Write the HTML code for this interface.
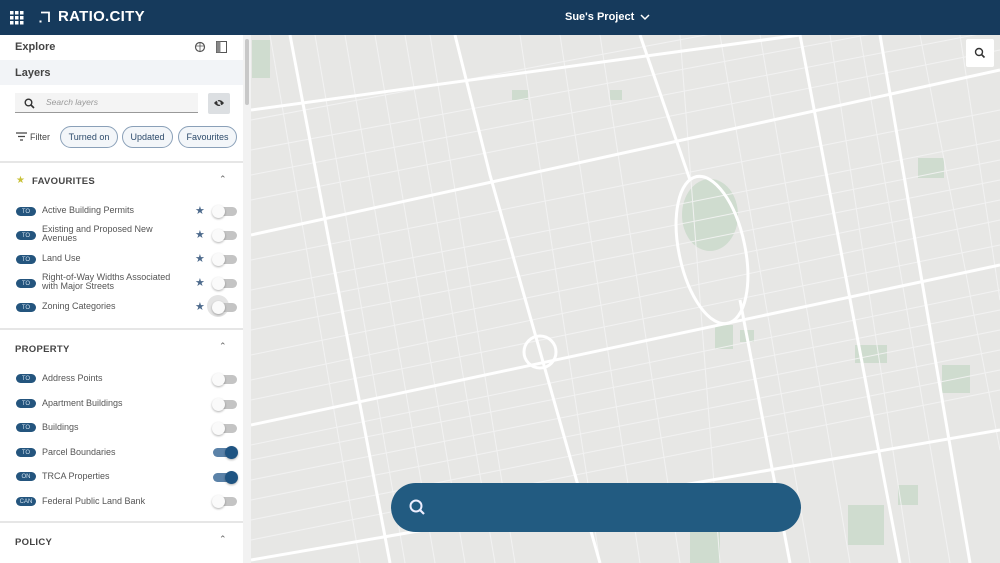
<!DOCTYPE html>
<html><head><style>
*{box-sizing:border-box;margin:0;padding:0}
body{width:1000px;height:563px;overflow:hidden;font-family:"Liberation Sans",sans-serif;position:relative;background:#fff}
.hdr{position:absolute;left:0;top:0;width:1000px;height:35px;background:#163a5c;color:#fff}
.side{position:absolute;left:0;top:35px;width:243px;height:528px;background:#fff;color:#333}
.sb{position:absolute;left:243px;top:35px;width:8px;height:528px;background:#f2f2f2}
.sb div{position:absolute;left:2px;top:4px;width:4px;height:66px;background:#c8c8c8;border-radius:2px}
.map{position:absolute;left:251px;top:35px;width:749px;height:528px;background:#e7e7e5;overflow:hidden}
.t{position:absolute;font-size:9px;color:#555}
.pill{position:absolute;font-size:9px;color:#2d4b6b;border:1px solid #8aa0b8;border-radius:11px;height:22px;line-height:20px;text-align:center;background:#f3f6f9}
.tag{position:absolute;left:16px;width:20px;height:9px;border-radius:5px;background:#24557e;color:#cfe0ee;font-size:6px;display:flex;align-items:center;justify-content:center;line-height:1}
.tg{position:absolute;left:213px;width:24px;height:9px;border-radius:5px;background:#c4c4c4}
.tg::after{content:"";position:absolute;left:-1px;top:-2px;width:13px;height:13px;border-radius:50%;background:#fafafa;box-shadow:0 1px 2px rgba(0,0,0,.3)}
.tg.on{background:#5b82a8}.tg.on::after{left:12px;background:#1f5482}
.st{position:absolute;left:195px;font-size:11px;color:#4d6a8c}
.sec{position:absolute;left:15px;font-size:9.5px;font-weight:bold;color:#444;letter-spacing:.3px}
.car{position:absolute;left:219px;font-size:9px;color:#666}
</style></head><body>
<div class="hdr">
<svg style="position:absolute;left:10px;top:11px" width="14" height="14"><g fill="#fff"><rect x="0" y="0" width="3.5" height="3.5"/><rect x="5" y="0" width="3.5" height="3.5"/><rect x="10" y="0" width="3.5" height="3.5"/><rect x="0" y="5" width="3.5" height="3.5"/><rect x="5" y="5" width="3.5" height="3.5"/><rect x="10" y="5" width="3.5" height="3.5"/><rect x="0" y="10" width="3.5" height="3.5"/><rect x="5" y="10" width="3.5" height="3.5"/><rect x="10" y="10" width="3.5" height="3.5"/></g></svg>
<svg style="position:absolute;left:39px;top:11px" width="12" height="12"><path d="M2 1.5H10V11" stroke="#fff" stroke-width="1.8" fill="none"/><rect x="0.5" y="9.5" width="2" height="2" fill="#fff"/></svg>
<div style="position:absolute;left:58px;top:8px;font-size:15px;font-weight:bold;letter-spacing:.3px">RATIO.CITY</div>
<div style="position:absolute;left:565px;top:11px;font-size:11px;font-weight:bold">Sue's Project</div>
<svg style="position:absolute;left:640px;top:13px" width="10" height="8"><path d="M1 2l4 4 4-4" stroke="#fff" stroke-width="1.5" fill="none"/></svg>
</div>
<div class="side">
<div style="position:absolute;left:15px;top:6px;font-size:11px;font-weight:bold;color:#444">Explore</div>
<svg style="position:absolute;left:194px;top:6px" width="12" height="12"><circle cx="6" cy="6" r="4.5" stroke="#555" stroke-width="1.2" fill="none"/><path d="M2 5h8M6 1.5v9" stroke="#555" stroke-width=".8"/></svg>
<svg style="position:absolute;left:216px;top:6px" width="11" height="12"><rect x="0.5" y="0.5" width="10" height="11" stroke="#555" fill="none"/><rect x="0.5" y="0.5" width="4" height="11" fill="#888"/></svg>
<div style="position:absolute;left:0;top:25px;width:243px;height:25px;background:#f2f4f7"></div>
<div style="position:absolute;left:15px;top:32px;font-size:11px;font-weight:bold;color:#444">Layers</div>
<div style="position:absolute;left:15px;top:58px;width:183px;height:20px;background:#f4f4f4;border-bottom:1px solid #999"></div>
<svg style="position:absolute;left:24px;top:63px" width="11" height="11"><circle cx="4.5" cy="4.5" r="3.3" stroke="#333" stroke-width="1.4" fill="none"/><path d="M7 7l3 3" stroke="#333" stroke-width="1.6"/></svg>
<div style="position:absolute;left:46px;top:62px;font-size:8.5px;font-style:italic;color:#999">Search layers</div>
<div style="position:absolute;left:208px;top:58px;width:22px;height:21px;background:#dcdfe2;border-radius:2px"></div>
<svg style="position:absolute;left:213px;top:63px" width="12" height="10"><path d="M1 5Q6 -1 11 5Q6 11 1 5Z" fill="#333"/><circle cx="6" cy="5" r="1.6" fill="#dcdfe2"/><path d="M2 0l8 10" stroke="#dcdfe2" stroke-width="1.2"/></svg>
<svg style="position:absolute;left:16px;top:97px" width="11" height="9"><path d="M0 1h11M2 4.5h7M4 8h3" stroke="#444" stroke-width="1.3"/></svg>
<div style="position:absolute;left:30px;top:97px;font-size:9px;color:#444">Filter</div>
<div class="pill" style="left:60px;top:91px;width:58px">Turned on</div>
<div class="pill" style="left:122px;top:91px;width:51px">Updated</div>
<div class="pill" style="left:178px;top:91px;width:59px">Favourites</div>
<div style="position:absolute;left:0;top:126px;width:243px;height:2px;background:#e6e6e6"></div>
<div style="position:absolute;left:16px;top:140px;font-size:10px;color:#c9c23a">★</div>
<div class="sec" style="left:32px;top:141px">FAVOURITES</div><div class="car" style="top:139px">⌃</div>
<div class="tag" style="top:172px">TO</div><div class="t" style="left:42px;top:170px">Active Building Permits</div><div class="st" style="top:169px">★</div><div class="tg" style="top:172px"></div>
<div class="tag" style="top:196px">TO</div><div class="t" style="left:42px;top:190px;line-height:9px">Existing and Proposed New<br>Avenues</div><div class="st" style="top:193px">★</div><div class="tg" style="top:196px"></div>
<div class="tag" style="top:220px">TO</div><div class="t" style="left:42px;top:218px">Land Use</div><div class="st" style="top:217px">★</div><div class="tg" style="top:220px"></div>
<div class="tag" style="top:244px">TO</div><div class="t" style="left:42px;top:238px;line-height:9px">Right-of-Way Widths Associated<br>with Major Streets</div><div class="st" style="top:241px">★</div><div class="tg" style="top:244px"></div>
<div class="tag" style="top:268px">TO</div><div class="t" style="left:42px;top:266px">Zoning Categories</div><div class="st" style="top:265px">★</div>
<div style="position:absolute;left:207px;top:260px;width:22px;height:22px;border-radius:50%;background:#e4e4e4"></div><div class="tg" style="top:268px"></div>
<div style="position:absolute;left:0;top:293px;width:243px;height:2px;background:#e6e6e6"></div>
<div class="sec" style="top:309px">PROPERTY</div><div class="car" style="top:306px">⌃</div>
<div class="tag" style="top:339px">TO</div><div class="t" style="left:42px;top:338px">Address Points</div><div class="tg" style="top:340px"></div>
<div class="tag" style="top:364px">TO</div><div class="t" style="left:42px;top:363px">Apartment Buildings</div><div class="tg" style="top:365px"></div>
<div class="tag" style="top:388px">TO</div><div class="t" style="left:42px;top:387px">Buildings</div><div class="tg" style="top:389px"></div>
<div class="tag" style="top:413px">TO</div><div class="t" style="left:42px;top:412px">Parcel Boundaries</div><div class="tg on" style="top:413px"></div>
<div class="tag" style="top:437px">ON</div><div class="t" style="left:42px;top:436px">TRCA Properties</div><div class="tg on" style="top:438px"></div>
<div class="tag" style="top:462px">CAN</div><div class="t" style="left:42px;top:461px">Federal Public Land Bank</div><div class="tg" style="top:462px"></div>
<div style="position:absolute;left:0;top:486px;width:243px;height:2px;background:#e6e6e6"></div>
<div class="sec" style="top:502px">POLICY</div><div class="car" style="top:499px">⌃</div>
</div>
<div class="sb"><div></div></div>
<div class="map">
<svg width="749" height="528" viewBox="251 35 749 528">
<g fill="#cfdccf">
<ellipse cx="710" cy="215" rx="28" ry="36"/>
<rect x="715" y="325" width="18" height="24"/><rect x="918" y="158" width="26" height="20"/><rect x="942" y="365" width="28" height="28"/><rect x="855" y="345" width="32" height="18"/><rect x="848" y="505" width="36" height="40"/><rect x="690" y="530" width="30" height="33"/><rect x="512" y="90" width="16" height="10"/><rect x="252" y="40" width="18" height="38"/><rect x="610" y="90" width="12" height="10"/><rect x="898" y="485" width="20" height="20"/><rect x="740" y="330" width="14" height="12"/>
</g>
<g stroke="#f4f4f4" stroke-width="1" fill="none" opacity=".9">
<path d="M270 35L360 563M315 35L405 563M345 35L435 563M375 35L465 563M405 35L495 563M430 35L515 563M520 35L600 563M560 35L640 563M600 35L680 563M680 35L720 563M720 35L810 563M760 35L850 563M830 35L910 563M860 35L950 563M920 35L1000 450M960 35L1000 300"/>
<path d="M251 150L1000 10M251 175L1000 30M251 200L1000 50M251 260L1000 110M251 290L1000 140M251 310L1000 160M251 330L1000 180M251 355L1000 200M251 380L1000 220M251 400L1000 245M251 445L1000 290M251 460L1000 310M251 480L1000 330M251 500L1000 350M251 520L1000 370M251 540L1000 390M251 120L1000 -20"/>
</g>
<g stroke="#ffffff" stroke-width="3" fill="none">
<path d="M290 35L390 563"/><path d="M455 35L490 175L600 563"/><path d="M640 35L690 180"/><path d="M740 300L790 563"/><path d="M800 35L900 563"/><path d="M880 35L970 563"/>
<path d="M251 235L1000 70"/><path d="M251 425L1000 265"/><path d="M251 560L1000 430"/><path d="M251 110L800 35"/>
<ellipse cx="712" cy="250" rx="33" ry="75" transform="rotate(-12 712 250)"/>
<circle cx="540" cy="352" r="16"/>
</g>
</svg>
<div style="position:absolute;left:715px;top:4px;width:28px;height:28px;background:#fff;border-radius:2px"></div>
<svg style="position:absolute;left:723px;top:12px" width="12" height="12"><circle cx="5" cy="5" r="3.5" stroke="#333" stroke-width="1.4" fill="none"/><path d="M7.5 7.5l3 3" stroke="#333" stroke-width="1.6"/></svg>
<div style="position:absolute;left:140px;top:448px;width:410px;height:49px;border-radius:25px;background:#225b81"></div>
<svg style="position:absolute;left:157px;top:463px" width="20" height="20"><circle cx="8" cy="8" r="5.5" stroke="#eef" stroke-width="2" fill="none"/><path d="M12 12l4 4" stroke="#eef" stroke-width="2.2"/></svg>
</div>
</body></html>
